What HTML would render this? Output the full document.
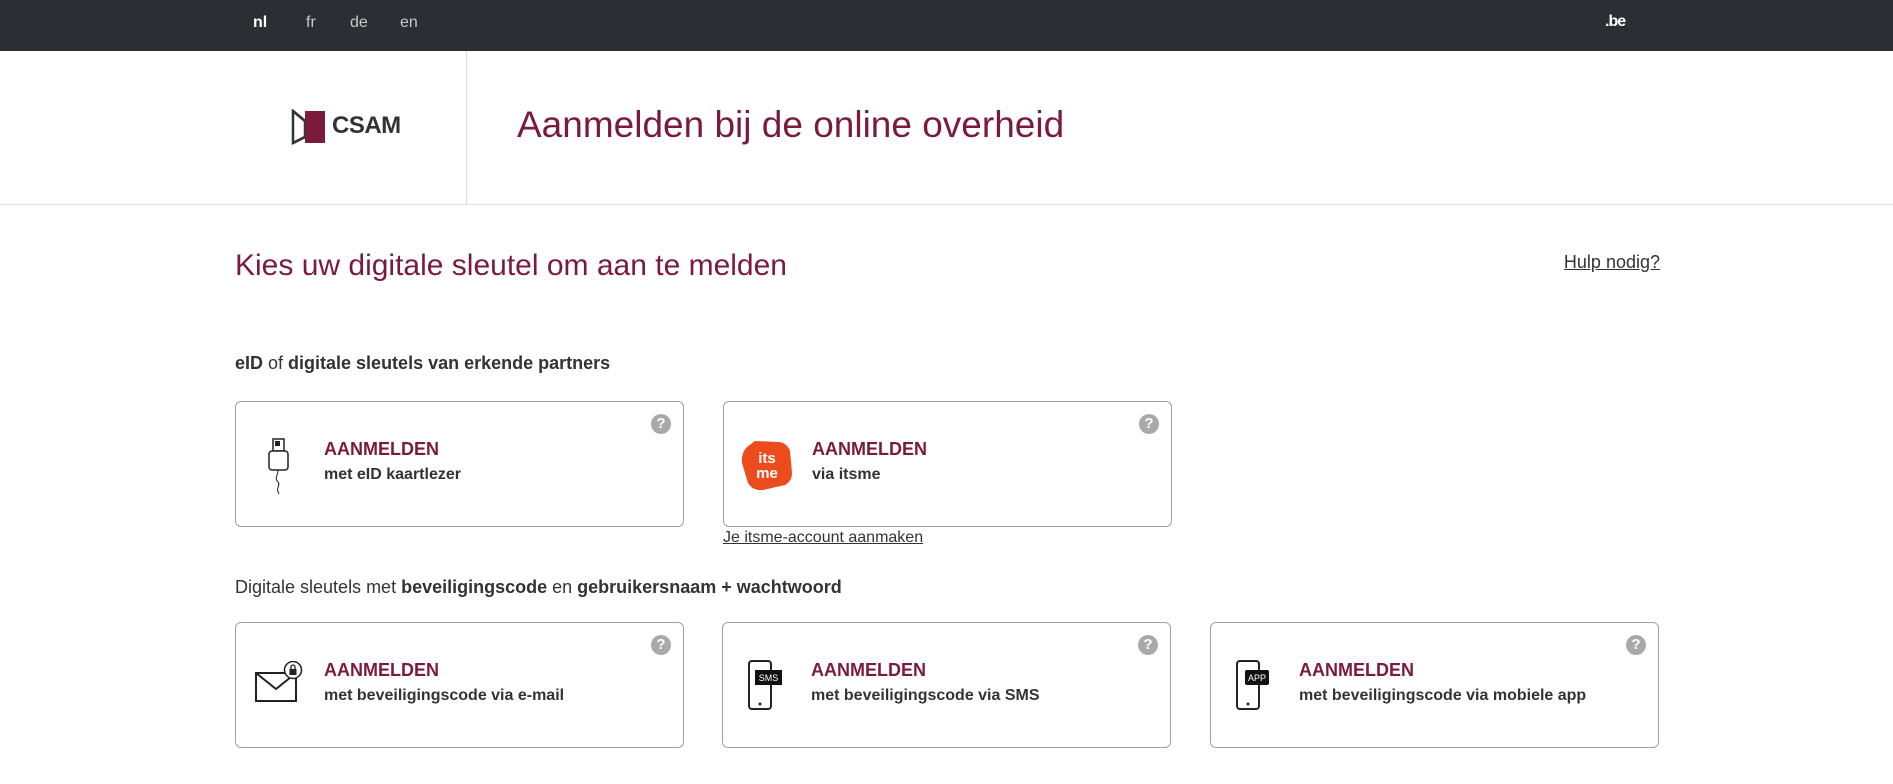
<!DOCTYPE html>
<html><head><meta charset="utf-8"><style>
*{box-sizing:border-box;margin:0;padding:0}
body{width:1893px;height:784px;overflow:hidden;background:#fff;font-family:"Liberation Sans",Arial,sans-serif;position:relative}
.top{position:absolute;left:0;top:0;width:1893px;height:51px;background:#2d2e33}
.top span{position:absolute;top:14px;font-size:16px;color:#c9c9cc}
.hdr{position:absolute;left:0;top:51px;width:1893px;height:154px;background:#fff;border-bottom:1px solid #dcdce6}
.div{position:absolute;left:466px;top:0;width:1px;height:153px;background:#dcdce6}
.title{position:absolute;left:517px;top:53px;font-size:37px;color:#7a1b3c;white-space:nowrap}
.abs{position:absolute;white-space:nowrap}
.card{position:absolute;width:449px;height:126px;border:1px solid #a0a0a0;border-radius:6px;background:#fff}
.card .a{position:absolute;left:88px;top:37px;font-size:18px;font-weight:bold;color:#7a1b3c}
.card .s{position:absolute;left:88px;top:64px;font-size:16px;font-weight:bold;color:#333}
.q{position:absolute;right:12px;top:12px;width:20px;height:20px;border-radius:50%;background:#a9a9a9;color:#fff;font-size:15px;font-weight:bold;text-align:center;line-height:20px}
.lbl{font-size:18px;color:#333}
</style></head><body>
<div class="top">
<span style="left:253px;color:#fff;font-weight:bold">nl</span>
<span style="left:306px">fr</span>
<span style="left:350px">de</span>
<span style="left:400px">en</span>
<span style="left:1605px;top:13px;color:#fff;font-weight:bold;letter-spacing:-1px">.be</span>
</div>
<div class="hdr">
<svg style="position:absolute;left:291px;top:58px" width="36" height="36" viewBox="0 0 36 36">
<path d="M2 2 L14 12 L14 28 L2 34 Z" fill="#fff" stroke="#333" stroke-width="2.5"/>
<path d="M14 2 L34 2 L34 34 L14 34 Z" fill="#7a1b3c"/>
<path d="M2 2 L14 12 M2 34 L14 28" stroke="#333" stroke-width="2.5"/>
</svg>
<div class="abs" style="left:332px;top:61px;font-size:24px;font-weight:bold;color:#333;letter-spacing:-0.5px">CSAM</div>
<div class="div"></div>
<div class="title">Aanmelden bij de online overheid</div>
</div>
<div class="abs" style="left:235px;top:249px;font-size:30px;color:#7a1b3c">Kies uw digitale sleutel om aan te melden</div>
<div class="abs" style="left:1553px;top:252px;font-size:18px;color:#333;text-decoration:underline;width:107px;text-align:right">Hulp nodig?</div>
<div class="abs lbl" style="left:235px;top:353px"><b>eID</b> of <b>digitale sleutels van erkende partners</b></div>

<div class="card" style="left:235px;top:401px">
<svg style="position:absolute;left:30px;top:36px" width="26" height="58" viewBox="0 0 26 58"><rect x="7" y="1" width="11" height="12" fill="#fff" stroke="#222" stroke-width="1.5"/><rect x="9" y="3" width="5" height="5" fill="#222"/><rect x="3" y="13" width="19" height="19" rx="3" fill="#fff" stroke="#222" stroke-width="1.5"/><path d="M12 32 C12 38 8 40 12 44 C15 47 9 50 13 56" fill="none" stroke="#222"/></svg>
<div class="a">AANMELDEN</div><div class="s">met eID kaartlezer</div><div class="q">?</div></div>

<div class="card" style="left:723px;top:401px">
<svg style="position:absolute;left:17px;top:37px" width="52" height="52" viewBox="0 0 52 52"><path d="M14 2 L38 3 Q46 4 49 12 L51 34 Q51 42 44 46 L22 51 Q12 52 7 44 L1 24 Q0 14 6 8 Z" fill="#ec4b1c"/><text x="26" y="24" font-size="15" font-weight="bold" fill="#fff" text-anchor="middle" font-family="Liberation Sans">its</text><text x="26" y="39" font-size="15" font-weight="bold" fill="#fff" text-anchor="middle" font-family="Liberation Sans">me</text></svg>
<div class="a">AANMELDEN</div><div class="s">via itsme</div><div class="q">?</div></div>
<div class="abs" style="left:723px;top:529px;font-size:16px;color:#333;text-decoration:underline">Je itsme-account aanmaken</div>

<div class="abs lbl" style="left:235px;top:577px">Digitale sleutels met <b>beveiligingscode</b> en <b>gebruikersnaam + wachtwoord</b></div>

<div class="card" style="left:235px;top:622px">
<svg style="position:absolute;left:18px;top:38px" width="56" height="46" viewBox="0 0 56 46"><rect x="2" y="12" width="40" height="28" fill="#fff" stroke="#222" stroke-width="2"/><path d="M2 12 L22 28 L42 12" fill="none" stroke="#222" stroke-width="2"/><circle cx="39" cy="9" r="8.5" fill="#fff" stroke="#222" stroke-width="1.5"/><rect x="35.5" y="8" width="7" height="6" fill="#222"/><path d="M37 8 V6 a2 2 0 0 1 4 0 V8" fill="none" stroke="#222" stroke-width="1.3"/></svg>
<div class="a">AANMELDEN</div><div class="s">met beveiligingscode via e-mail</div><div class="q">?</div></div>

<div class="card" style="left:722px;top:622px">
<svg style="position:absolute;left:24px;top:36px" width="36" height="52" viewBox="0 0 36 52"><rect x="2" y="2" width="22" height="48" rx="3" fill="#fff" stroke="#222" stroke-width="2"/><circle cx="13" cy="45" r="1.5" fill="#222"/><rect x="8" y="11" width="27" height="15" fill="#111"/><text x="21.5" y="22" font-size="9" fill="#fff" text-anchor="middle" font-family="Liberation Sans">SMS</text></svg>
<div class="a">AANMELDEN</div><div class="s">met beveiligingscode via SMS</div><div class="q">?</div></div>

<div class="card" style="left:1210px;top:622px">
<svg style="position:absolute;left:24px;top:36px" width="36" height="52" viewBox="0 0 36 52"><rect x="2" y="2" width="22" height="48" rx="3" fill="#fff" stroke="#222" stroke-width="2"/><circle cx="13" cy="45" r="1.5" fill="#222"/><rect x="10" y="11" width="24" height="15" rx="2" fill="#111"/><text x="22" y="22" font-size="9" fill="#fff" text-anchor="middle" font-family="Liberation Sans">APP</text></svg>
<div class="a">AANMELDEN</div><div class="s">met beveiligingscode via mobiele app</div><div class="q">?</div></div>
</body></html>
